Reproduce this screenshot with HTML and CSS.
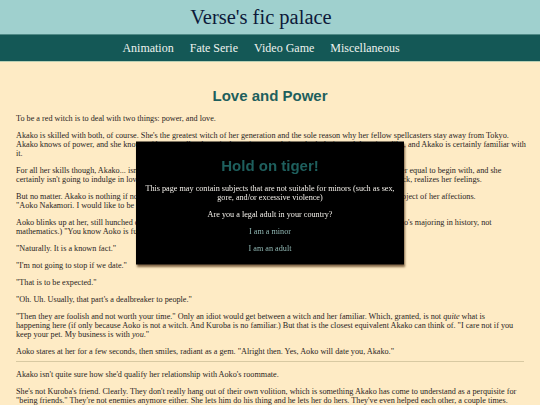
FILE: index.html
```html
<!DOCTYPE html>
<html lang="en">
<head>
    <meta charset="UTF-8">
    <meta name="viewport" content="width=device-width, initial-scale=1.0">
    <title>Love and Power - Verse's fic palace</title>
    <link rel="stylesheet" href="styles.css">
</head>
<body>

<header class="site-header">
    <h1 class="site-title">Verse's fic palace</h1>
</header>

<nav class="site-nav">
    <a href="#">Animation</a>
    <a href="#">Fate Serie</a>
    <a href="#">Video Game</a>
    <a href="#">Miscellaneous</a>
</nav>

<main class="story">
    <h2 class="story-title">Love and Power</h2>

    <p>To be a red witch is to deal with two things: power, and love.</p>
    <p>Akako is skilled with both, of course. She's the greatest witch of her generation and the sole reason why her fellow spellcasters stay away from Tokyo.<br>
    Akako knows of power, and she knows of love, as all red magic draws its strength from both desire and devotion alike, and Akako is certainly familiar with<br>
    it.</p>
    <p>For all her skills though, Akako... isn't very good at romance. It does not help that so few people in all the world are her equal to begin with, and she<br>
    certainly isn't going to indulge in love with some lesser human being just because one of them, through sheer dumb luck, realizes her feelings.</p>
    <p>But no matter. Akako is nothing if not one to beat around the bush, so she wastes no time at all going to seek out the object of her affections.<br>
    "Aoko Nakamori. I would like to be your girlfriend."</p>
    <p>Aoko blinks up at her, still hunched over her homework (which is rather strange, since Akako is fairly certain that Aoko's majoring in history, not<br>
    mathematics.) "You know Aoko is fucking Kuroba, right?"</p>
    <p>"Naturally. It is a known fact."</p>
    <p>"I'm not going to stop if we date."</p>
    <p>"That is to be expected."</p>
    <p>"Oh. Uh. Usually, that part's a dealbreaker to people."</p>
    <p>"Then they are foolish and not worth your time." Only an idiot would get between a witch and her familiar. Which, granted, is not <em>quite</em> what is<br>
    happening here (if only because Aoko is not a witch. And Kuroba is no familiar.) But that is the closest equivalent Akako can think of. "I care not if you<br>
    keep your pet. My business is with <em>you</em>."</p>
    <p>Aoko stares at her for a few seconds, then smiles, radiant as a gem. "Alright then. Yes, Aoko will date you, Akako."</p>

    <hr>

    <p>Akako isn't quite sure how she'd qualify her relationship with Aoko's roommate.</p>
    <p>She's not Kuroba's friend. Clearly. They don't really hang out of their own volition, which is something Akako has come to understand as a perquisite for<br>
    "being friends." They're not enemies anymore either. She lets him do his thing and he lets her do hers. They've even helped each other, a couple times.</p>
</main>

<div class="age-gate">
    <h2>Hold on tiger!</h2>
    <p>This page may contain subjects that are not suitable for minors (such as sex, gore, and/or excessive violence)</p>
    <p>Are you a legal adult in your country?</p>
    <a href="#" class="gate-choice">I am a minor</a>
    <a href="#" class="gate-choice">I am an adult</a>
</div>

</body>
</html>
```

FILE: styles.css
```css
/* Reset some styles */
* {
    margin: 0;
    padding: 0;
    box-sizing: border-box;
}

body {
    font-family: 'Liberation Serif', serif;
    font-size: 8.2px;
    line-height: 9px;
    background-color: #feebc5;
    color: #2a241e;
}

.site-header {
    background-color: #9fd0ce;
    height: 35px;
    padding-right: 18px;
    border-bottom: 1px solid #4f8a87;
    display: flex;
    justify-content: center;
    align-items: center;
}

.site-title {
    font-size: 20.5px;
    font-weight: normal;
    color: #0d1a3a;
}

.site-nav {
    background-color: #145856;
    height: 27px;
    padding-right: 18px;
    border-bottom: 1px solid #b9cfb4;
    display: flex;
    justify-content: center;
    align-items: center;
    gap: 16px;
}

.site-nav a {
    color: #eef3ef;
    text-decoration: none;
    font-size: 12px;
}

.story {
    padding: 0 16px;
    white-space: nowrap;
}

.story-title {
    font-family: 'Liberation Sans', Arial, sans-serif;
    font-size: 15px;
    line-height: 17px;
    color: #1e5f5d;
    text-align: center;
    margin: 25px 0 10px;
}

.story p {
    margin-bottom: 8px;
}

/* scene break sits a little closer to the paragraph above */
.story hr {
    border: none;
    border-top: 1px solid #d8c9a2;
    margin: -3px 0 8px;
}

/* Age warning box */
.age-gate {
    position: fixed;
    top: 50%;
    left: 50%;
    transform: translate(-50%, -50%);
    width: 268px;
    background-color: #000;
    color: #f1eee8;
    text-align: center;
    padding: 15px 5px 12px;
    box-shadow: 1px 2px 2px rgba(80, 50, 20, 0.7);
}

.age-gate h2 {
    font-family: 'Liberation Sans', Arial, sans-serif;
    font-size: 15px;
    line-height: 17px;
    color: #1e5f5d;
    margin-bottom: 10px;
}

.age-gate p {
    margin-bottom: 8px;
}

.gate-choice {
    display: block;
    color: #8fb6b2;
    text-decoration: none;
    margin-top: 8px;
}
```
